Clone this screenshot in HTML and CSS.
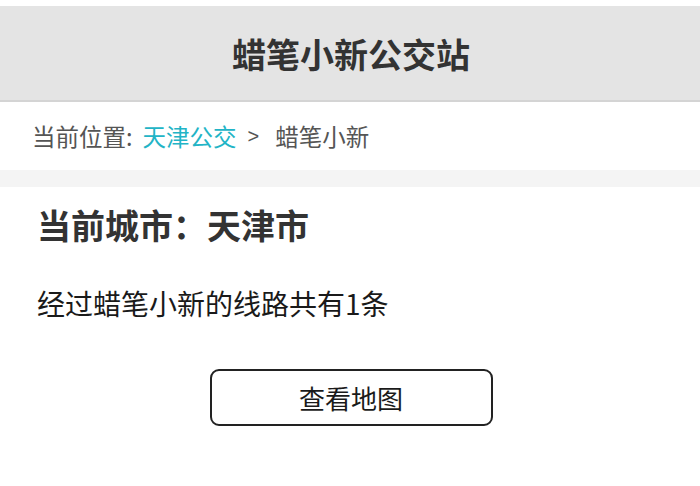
FILE: index.html
```html
<!DOCTYPE html>
<html lang="zh-CN">
<head>
<meta charset="utf-8">
<link rel="stylesheet" href="styles.css">
</head>
<body>
<div class="top-gap"></div>
<header class="site-header">蜡笔小新公交站</header>
<nav class="crumbs">
  <span class="crumb-label">当前位置:</span>
  <a class="crumb-link" href="#">天津公交</a>
  <span class="crumb-sep">&gt;</span>
  <span class="crumb-current">蜡笔小新</span>
</nav>
<div class="band"></div>
<main class="content">
  <h1 class="city">当前城市：天津市</h1>
  <p class="summary">经过蜡笔小新的线路共有1条</p>
  <div class="actions">
    <button class="map-btn">查看地图</button>
  </div>
</main>
</body>
</html>
```

FILE: styles.css
```css
html, body {
  margin: 0;
  padding: 0;
  background: #ffffff;
  font-family: "Noto Sans CJK SC", "Noto Sans", sans-serif;
}
.top-gap {
  height: 6px;
  background: #ffffff;
}
.site-header {
  height: 94px;
  background: #e4e4e4;
  border-bottom: 2px solid #d4d4d4;
  display: flex;
  align-items: center;
  justify-content: center;
  font-size: 34px;
  font-weight: bold;
  color: #333333;
  padding-left: 2px;
}
.crumbs {
  height: 68px;
  display: flex;
  align-items: center;
  padding-left: 32px;
  font-size: 23.5px;
  color: #555555;
}
.crumb-label {
  margin-right: 10px;
}
.crumb-link {
  color: #22b4c6;
  text-decoration: none;
}
.crumb-sep {
  margin: 0 16px 0 11px;
  font-family: "Liberation Sans", sans-serif;
  font-size: 20px;
}
.band {
  height: 17px;
  background: #f4f4f4;
}
.content {
  padding: 0 37px;
}
.city {
  margin: 18px 0 0 0;
  font-size: 34px;
  line-height: 40px;
  font-weight: bold;
  color: #333333;
}
.summary {
  margin: 38px 0 0 0;
  font-size: 28px;
  line-height: 40px;
  color: #1a1a1a;
}
.actions {
  display: flex;
  justify-content: center;
  margin-top: 46px;
  padding-left: 2px;
}
.map-btn {
  width: 283px;
  height: 57px;
  border: 2px solid #222222;
  border-radius: 9px;
  background: #ffffff;
  font-family: inherit;
  font-size: 26px;
  color: #1a1a1a;
  padding: 0;
}
```
